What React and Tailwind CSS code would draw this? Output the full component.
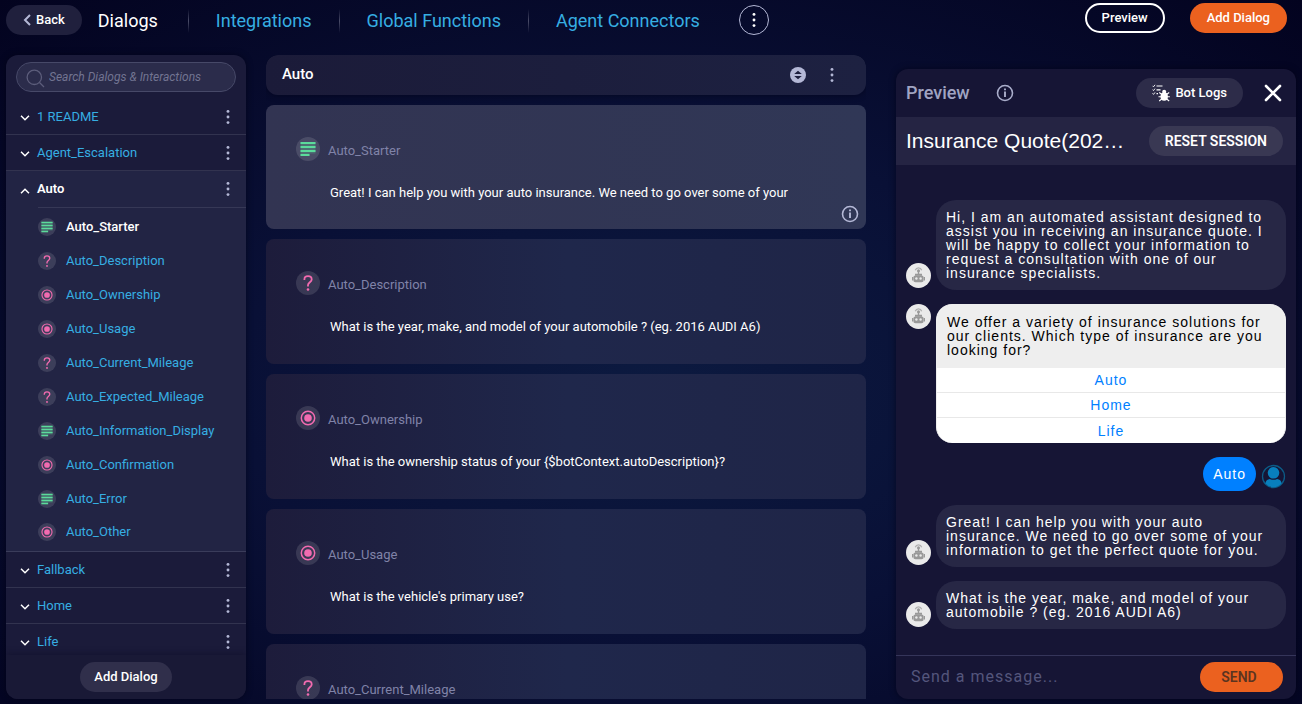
import React from 'react';

const KIND = { Starter: 'text', Description: 'ask', Ownership: 'choice', Usage: 'choice', Current_Mileage: 'ask', Expected_Mileage: 'ask', Information_Display: 'text', Confirmation: 'choice', Error: 'text', Other: 'choice' };

const CARDS = [
  ['Starter', 'Great! I can help you with your auto insurance. We need to go over some of your'],
  ['Description', 'What is the year, make, and model of your automobile ? (eg. 2016 AUDI A6)'],
  ['Ownership', 'What is the ownership status of your {$botContext.autoDescription}?'],
  ['Usage', "What is the vehicle's primary use?"],
  ['Current_Mileage', ''],
];

function Dots({ className }) {
  return (
    <svg viewBox="0 0 4 16" className={className} fill="currentColor" aria-hidden="true">
      <circle cx="2" cy="2.4" r="1.45" />
      <circle cx="2" cy="8" r="1.45" />
      <circle cx="2" cy="13.6" r="1.45" />
    </svg>
  );
}

function InfoIcon() {
  return (
    <svg viewBox="0 0 18 18" className="size-[18px]" fill="none" stroke="currentColor" aria-hidden="true">
      <circle cx="9" cy="9" r="7.5" strokeWidth="1.6" />
      <path d="M9 7.4v5.6M9 4.5v1.7" strokeWidth="1.9" />
    </svg>
  );
}

function KindIcon({ kind, className }) {
  return (
    <svg viewBox="0 0 24 24" className={className} fill="none" aria-hidden="true">
      <circle cx="12" cy="12" r="12" fill="#ffffff" fillOpacity="0.12" />
      {kind === 'text' && (
        <>
          <path d="M4.5 5h15v11.5h-6V19h-9z" fill="#5bdb9b" fillOpacity="0.25" />
          <path d="M4.5 6h15M4.5 10h15M4.5 14h15M4.5 18h9" stroke="#5bdb9b" strokeWidth="2" />
        </>
      )}
      {kind === 'ask' && (
        <>
          <path d="M8.4 9V8.400C8.4 6.500 10 5.200 12 5.200s3.700 1.300 3.700 3.200c0 2.600-3.700 3-3.700 5.600v1.400" stroke="#f26bb0" strokeWidth="1.800" />
          <circle cx="12" cy="18.500" r="1.300" fill="#f26bb0" />
        </>
      )}
      {kind === 'choice' && (
        <>
          <circle cx="12" cy="12" r="6.700" stroke="#f26bb0" strokeWidth="1.500" />
          <circle cx="12" cy="12" r="3.800" fill="#f26bb0" />
        </>
      )}
    </svg>
  );
}

function Chevron({ up }) {
  return (
    <svg viewBox="0 0 10 6" className="mt-[3px] h-[6px] w-[10px] text-white" fill="none" stroke="currentColor" strokeWidth="1.500" aria-hidden="true">
      <path d={up ? 'M1 5.200 5 1.200l4 4' : 'M1 .8l4 4 4-4'} />
    </svg>
  );
}

function DialogRow({ name, open }) {
  return (
    <div className={open ? 'flex h-9 items-center pr-3 pl-[14px]' : 'flex h-9 items-center border-b border-[#32334f] pr-3 pl-[14px]'}>
      <button type="button" aria-expanded={!!open} className="flex flex-1 items-center gap-[7px] text-left">
        <Chevron up={open} />
        <span className={open ? 'font-semibold text-white' : 'text-[#36aee2]'}>{name}</span>
      </button>
      <button type="button" aria-label={name + ' options'} className="flex w-3 justify-center text-[#b4b8d6]">
        <Dots className="h-4 w-1" />
      </button>
    </div>
  );
}

function Sidebar() {
  const items = Object.keys(KIND);
  return (
    <aside className="flex w-60 shrink-0 flex-col overflow-hidden rounded-xl bg-[#1b1b3a] text-[13px] shadow-[0_0_6px_#00001499]">
      <div className="px-[10px] pt-[7px] pb-[7px]">
        <label className="flex h-[30px] items-center gap-1 rounded-full border border-[#474968] bg-[#2b2c4b] px-[9px]">
          <svg viewBox="0 0 19 19" className="mt-[3px] size-[19px] shrink-0 text-[#5c5d7b]" fill="none" stroke="currentColor" strokeWidth="1.300" aria-hidden="true">
            <circle cx="8.300" cy="8.300" r="7.200" />
            <path d="m13.500 13.500 4.500 4.500" />
          </svg>
          <input aria-label="Search Dialogs & Interactions" placeholder="Search Dialogs & Interactions" className="w-full min-w-0 bg-transparent text-xs italic text-white outline-none placeholder:text-[#727491]" />
        </label>
      </div>
      <div className="min-h-0 flex-1 overflow-hidden">
        <DialogRow name="1 README" />
        <DialogRow name="Agent_Escalation" />
        <section className="border-b border-[#3a3c5a] bg-[#222444] pb-[3px]">
          <DialogRow name="Auto" open />
          <ul className="ml-8 border-t border-[#363856] pt-[2px]">
            {items.map((n, i) => (
              <li key={n} className={i === items.length - 1 ? 'flex h-8 items-center' : 'flex h-[34px] items-center'}>
                <button type="button" className={i === 0 ? 'flex items-center gap-[10px] font-medium text-white' : 'flex items-center gap-[10px] text-[#36aee2]'}>
                  <KindIcon kind={KIND[n]} className="size-[18px]" />
                  Auto_{n}
                </button>
              </li>
            ))}
          </ul>
        </section>
        <DialogRow name="Fallback" />
        <DialogRow name="Home" />
        <DialogRow name="Life" />
      </div>
      <div className="flex justify-center bg-[#191936] pt-[7px] pb-[7px] shadow-[0_-2px_6px_#0a0a2266]">
        <button type="button" className="h-[30px] rounded-full bg-[#302f4b] px-[14px] font-medium text-white">Add Dialog</button>
      </div>
    </aside>
  );
}

function Card({ name, text, active }) {
  return (
    <article className={active ? 'relative h-[124px] shrink-0 rounded-lg bg-linear-to-r from-[#323452] to-[#303756] px-[30px] pt-8' : 'relative h-[125px] shrink-0 rounded-lg bg-linear-to-r from-[#1d1c3b] via-[#1f274b] to-[#1f2547] px-[30px] pt-8'}>
      <h3 className="flex items-center gap-2 text-[13px] text-[#8083a8]">
        <KindIcon kind={KIND[name]} className="size-6" />
        <span className="pt-[3px]">Auto_{name}</span>
      </h3>
      {text && <p className="mt-[22px] ml-[34px] text-[13px] leading-5 text-white">{text}</p>}
      {active && (
        <button type="button" aria-label="Interaction details" className="absolute right-[7px] bottom-[6px] text-[#b4b8d6]">
          <InfoIcon />
        </button>
      )}
    </article>
  );
}

function Flow() {
  return (
    <main className="flex min-w-0 flex-1 flex-col gap-[10px] overflow-hidden rounded-t-xl">
      <header className="flex h-10 shrink-0 items-center justify-between rounded-xl bg-linear-to-r from-[#1b1b39] to-[#1d2141] pr-[30px] pl-4 shadow-[0_0_6px_#00001499]">
        <h2 className="pb-[2px] text-[15px] font-medium text-white">Auto</h2>
        <div className="flex items-center gap-[22px] text-[#b4b8d6]">
          <button type="button" aria-label="Reorder interactions">
            <svg viewBox="0 0 16 16" className="size-4" aria-hidden="true">
              <circle cx="8" cy="8" r="8" fill="currentColor" />
              <path d="m8 3.700 3.800 3.300H4.200zM8 12.300 4.200 9h7.600z" fill="#1d1f3e" />
            </svg>
          </button>
          <button type="button" aria-label="Auto options" className="flex w-2 justify-center">
            <Dots className="h-4 w-1" />
          </button>
        </div>
      </header>
      {CARDS.map(([n, t], i) => <Card key={n} name={n} text={t} active={i === 0} />)}
    </main>
  );
}

function Bot() {
  return (
    <svg viewBox="0 0 25 25" className="size-[25px] shrink-0" aria-hidden="true">
      <circle cx="12.500" cy="12.500" r="12.500" fill="#eaeaea" />
      <path d="M9.300 7.200a3.400 3.400 0 0 1 6.400 0" fill="none" stroke="#b0b0b0" strokeWidth="1.300" />
      <circle cx="12.500" cy="7.800" r="1.500" fill="#999999" />
      <path d="M11.800 8h1.400v4h-1.400zM9 10.800h7v2H9z" fill="#999999" />
      <rect x="7.300" y="12.400" width="10.400" height="6.800" rx="2.200" fill="#999999" />
      <path d="M6 14h1v3.600H6zM18 14h1v3.600h-1z" fill="#999999" />
      <circle cx="10.400" cy="15.500" r="1.200" fill="#eaeaea" />
      <circle cx="14.600" cy="15.500" r="1.200" fill="#eaeaea" />
    </svg>
  );
}

function BotMessage({ children }) {
  return (
    <div className="flex items-end gap-[5px]">
      <div className="pb-[2px]"><Bot /></div>
      <p className="flex-1 rounded-[20px] bg-[#272745] px-[10px] py-[10px] text-white">{children}</p>
    </div>
  );
}

function Preview() {
  return (
    <aside className="mt-[14px] flex w-[400px] shrink-0 flex-col overflow-hidden rounded-xl bg-[#161535] shadow-[0_0_6px_#00001499]">
      <header className="flex h-12 shrink-0 items-center pr-[14px] pl-[10px]">
        <h2 className="text-lg font-medium text-[#a0a4c2]">Preview</h2>
        <button type="button" aria-label="Preview details" className="ml-[26px] text-[#a9adca]"><InfoIcon /></button>
        <button type="button" className="ml-auto flex h-[30px] items-center gap-[5px] rounded-full bg-[#2d2c49] px-4 text-[13px] font-medium text-white">
          <svg viewBox="0 0 18 18" className="size-[18px]" fill="none" stroke="currentColor" aria-hidden="true">
            <path d="M4.500 2h6M4.500 5.800h4M4.500 9.600H6" strokeWidth="1.200" />
            <path d="m.5 1.800 1 1L3 .8M.5 5.600l1 1L3 4.600M.5 9.400l1 1L3 8.400" strokeWidth=".9" />
            <ellipse cx="12.200" cy="12.500" rx="3.700" ry="4.300" fill="currentColor" stroke="none" />
            <circle cx="12.200" cy="7.800" r="2" fill="currentColor" stroke="none" />
            <path d="m7.200 8.500 2.800 2M17.200 8.500l-2.800 2M6.500 12.800h11.400M7.200 17 10 14.700M17.200 17l-2.800-2.300" strokeWidth="1.100" />
          </svg>
          Bot Logs
        </button>
        <button type="button" aria-label="Close preview" className="ml-[21px] text-white">
          <svg viewBox="0 0 18 18" className="size-[18px]" stroke="currentColor" strokeWidth="2.600" strokeLinecap="round" aria-hidden="true"><path d="m2 2 14 14M16 2 2 16" /></svg>
        </button>
      </header>
      <div className="flex h-12 shrink-0 items-center justify-between bg-[#252443] pr-[13px] pl-[10px]">
        <h3 className="font-[Liberation_Sans] text-[21px] text-white">Insurance Quote(202…</h3>
        <button type="button" className="h-[30px] rounded-full bg-[#393853] px-4 text-sm font-semibold text-white">RESET SESSION</button>
      </div>
      <div className="flex min-h-0 flex-1 flex-col justify-end gap-[14px] overflow-hidden px-[10px] pb-[26px] font-[Liberation_Sans] text-sm leading-[14px] tracking-[1px]">
        <BotMessage>Hi, I am an automated assistant designed to assist you in receiving an insurance quote. I will be happy to collect your information to request a consultation with one of our insurance specialists.</BotMessage>
        <div className="flex items-start gap-[5px]">
          <Bot />
          <div className="flex-1 overflow-hidden rounded-2xl border border-b-0 border-[#eeeeee] bg-white">
            <p className="bg-[#eeeeee] px-[10px] pt-[10px] pb-[11px] text-black">We offer a variety of insurance solutions for our clients. Which type of insurance are you looking for?</p>
            <div className="flex flex-col divide-y divide-[#e8e8e8] text-[#0080ff]">
              {['Auto', 'Home', 'Life'].map((o) => <button key={o} type="button" className="h-[25px] tracking-[1px]">{o}</button>)}
            </div>
          </div>
        </div>
        <div className="flex items-center justify-end gap-[5px]">
          <p className="rounded-[17px] bg-[#0080ff] p-[10px] text-white">Auto</p>
          <svg viewBox="0 0 25 25" className="mt-1 size-[25px]" aria-hidden="true">
            <circle cx="12.500" cy="12.500" r="11" fill="none" stroke="#0c5b86" strokeWidth="1.300" />
            <circle cx="12.500" cy="8.800" r="5.800" fill="#087fbd" />
            <path d="M4.400 19.500c.2-3 2-4.300 4.500-4.600 2.200 1.200 5 1.200 7.200 0 2.500.3 4.300 1.600 4.500 4.600a10.700 10.700 0 0 1-16.200 0z" fill="#087fbd" />
          </svg>
        </div>
        <BotMessage>Great! I can help you with your auto insurance. We need to go over some of your information to get the perfect quote for you.</BotMessage>
        <BotMessage>What is the year, make, and model of your automobile ? (eg. 2016 AUDI A6)</BotMessage>
      </div>
      <form className="flex h-11 shrink-0 items-center border-t border-[#35355a] pr-[13px] pb-px pl-[15px]" onSubmit={(e) => e.preventDefault()}>
        <input aria-label="Send a message" placeholder="Send a message..." className="min-w-0 flex-1 bg-transparent text-base tracking-[1px] text-white outline-none placeholder:text-[#54567c]" />
        <button type="submit" className="h-[30px] w-[83px] rounded-full bg-[#eb611f] pr-[5px] text-sm font-semibold text-[#5b3420]">SEND</button>
      </form>
    </aside>
  );
}

export default function App() {
  return (
    <div className="flex h-screen flex-col overflow-hidden bg-[#02021f] bg-[radial-gradient(ellipse_at_50%_55%,#0c1a40_0%,#091036_45%,#03031f_100%)] pb-[5px] font-[Roboto]">
      <header className="flex h-[55px] shrink-0 items-start pr-[15px] pl-[6px]">
        <button type="button" className="mt-[5px] flex h-[30px] items-center gap-[5px] rounded-full bg-[#20203d] px-[17px] text-[13px] font-medium text-white">
          <svg viewBox="0 0 8 12" className="h-3 w-2" fill="none" stroke="#b4b8d6" strokeWidth="2" aria-hidden="true"><path d="M7 1 2 6l5 5" /></svg>
          Back
        </button>
        <nav className="flex h-[42px] items-center text-lg text-[#36aee2]">
          <a href="#dialogs" className="px-[16px] text-white">Dialogs</a>
          <span className="mx-[14px] h-6 w-px bg-linear-to-b from-transparent via-[#4a4c68] to-transparent" />
          <a href="#integrations" className="px-[13px]">Integrations</a>
          <span className="mx-[14px] h-6 w-px bg-linear-to-b from-transparent via-[#4a4c68] to-transparent" />
          <a href="#functions" className="px-[13px]">Global Functions</a>
          <span className="mx-[14px] h-6 w-px bg-linear-to-b from-transparent via-[#4a4c68] to-transparent" />
          <a href="#connectors" className="px-[13px]">Agent Connectors</a>
        </nav>
        <button type="button" aria-label="More sections" className="mt-[5px] ml-[26px] flex size-[30px] items-center justify-center rounded-full border border-[#b4b8d6] text-white">
          <Dots className="h-4 w-1" />
        </button>
        <div className="mt-[3px] ml-auto flex gap-[25px] text-[13px] font-medium text-white">
          <button type="button" className="h-[30px] w-20 rounded-full border-2 border-white">Preview</button>
          <button type="button" className="h-[30px] rounded-full bg-[#eb611f] px-[17px]">Add Dialog</button>
        </div>
      </header>
      <div className="flex min-h-0 flex-1 pr-[6px] pl-[6px]">
        <Sidebar />
        <div className="flex min-w-0 flex-1 pr-[30px] pl-5"><Flow /></div>
        <Preview />
      </div>
    </div>
  );
}
